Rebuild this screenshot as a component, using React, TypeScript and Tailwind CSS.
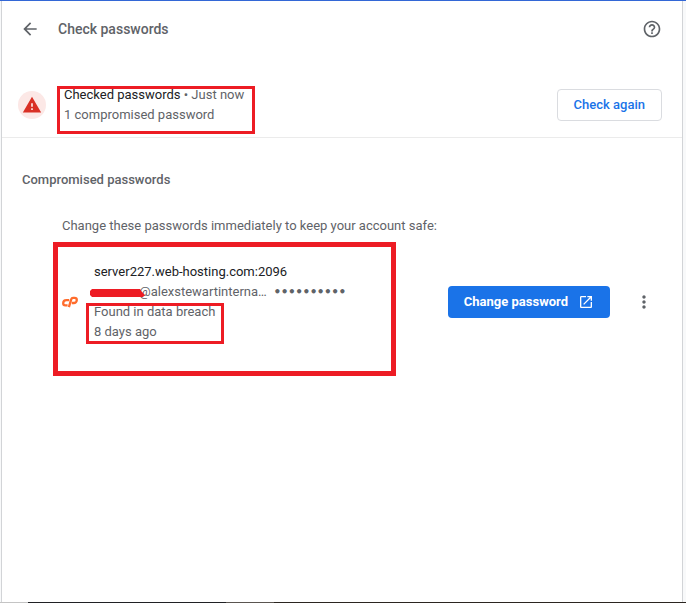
import React from "react";

function BackIcon() {
  return (
    <svg viewBox="0 0 24 24" className="size-5" fill="#5f6368" aria-hidden="true">
      <path d="M20 11H7.83l5.59-5.59L12 4l-8 8 8 8 1.41-1.41L7.83 13H20v-2z" />
    </svg>
  );
}

function HelpIcon() {
  return (
    <svg viewBox="0 0 24 24" className="size-5" fill="#5f6368" aria-hidden="true">
      <path d="M11 18h2v-2h-2v2zm1-16C6.48 2 2 6.48 2 12s4.48 10 10 10 10-4.48 10-10S17.52 2 12 2zm0 18c-4.41 0-8-3.59-8-8s3.59-8 8-8 8 3.59 8 8-3.59 8-8 8zm0-14c-2.21 0-4 1.79-4 4h2c0-1.1.9-2 2-2s2 .9 2 2c0 2-3 1.75-3 5h2c0-2.25 3-2.5 3-5 0-2.21-1.79-4-4-4z" />
    </svg>
  );
}

function WarningIcon() {
  return (
    <svg viewBox="0 0 24 24" className="size-5" fill="#d93025" aria-hidden="true">
      <path d="M1 21h22L12 2 1 21zm12-3h-2v-2h2v2zm0-4h-2v-4h2v4z" />
    </svg>
  );
}

function OpenIcon() {
  return (
    <svg viewBox="0 0 24 24" className="size-4" fill="currentColor" aria-hidden="true">
      <path d="M19 19H5V5h7V3H5c-1.11 0-2 .9-2 2v14c0 1.1.89 2 2 2h14c1.1 0 2-.9 2-2v-7h-2v7zM14 3v2h3.59l-9.83 9.83 1.41 1.41L19 6.41V10h2V3h-7z" />
    </svg>
  );
}

function MoreIcon() {
  return (
    <svg viewBox="0 0 24 24" className="size-5" fill="#5f6368" aria-hidden="true">
      <path d="M12 8c1.1 0 2-.9 2-2s-.9-2-2-2-2 .9-2 2 .9 2 2 2zm0 2c-1.1 0-2 .9-2 2s.9 2 2 2 2-.9 2-2-.9-2-2-2zm0 6c-1.1 0-2 .9-2 2s.9 2 2 2 2-.9 2-2-.9-2-2-2z" />
    </svg>
  );
}

function HostIcon() {
  return (
    <svg viewBox="0 0 16 16" className="size-4 shrink-0" fill="none" stroke="#ff6c2c" strokeWidth="2.3" aria-hidden="true">
      <path d="M7.2 6.1H4.4C2.6 6.1 1.2 7.5 1.2 9.3c0 1.3.9 2.1 2.1 2.1h2.3" />
      <path d="M6.9 13.2 9.2 5.4c.3-1 .8-1.5 1.8-1.5h1.6c1.4 0 2.2.8 2.2 2 0 1.7-1.3 3.1-3 3.1h-2" />
    </svg>
  );
}

function Mark({ className }: { className: string }) {
  return <div aria-hidden="true" className={`pointer-events-none absolute border-[#ed1c24] ${className}`} />;
}

export default function App() {
  return (
    <div className="flex min-h-screen flex-col border-t border-[#3367d6] bg-[#f8f9fa] font-['Roboto','Liberation_Sans',sans-serif] text-[13px] leading-5 text-[#5f6368]">
      <main className="mr-[3px] ml-px flex-1 border-x border-[#d2d4d7] bg-white">
        <header className="flex h-14 items-center justify-between pr-5 pl-[18px]">
          <div className="flex items-center gap-[18px]">
            <button type="button" aria-label="Back">
              <BackIcon />
            </button>
            <h1 className="text-sm font-medium">Check passwords</h1>
          </div>
          <button type="button" aria-label="Help">
            <HelpIcon />
          </button>
        </header>

        <section className="mt-4 flex h-[65px] items-center justify-between border-b border-[#ebebeb] pr-5 pl-4">
          <div className="flex items-center gap-[18px]">
            <div className="flex size-7 items-center justify-center rounded-full bg-[#fce8e6]">
              <WarningIcon />
            </div>
            <div className="relative">
              <p>
                <span className="text-[#202124]">Checked passwords</span> • Just now
              </p>
              <p>1 compromised password</p>
              <Mark className="top-px -left-[7px] h-12 w-[198px] border-3" />
            </div>
          </div>
          <button type="button" className="h-8 rounded-sm border border-[#dadce0] px-4 font-medium text-[#1a73e8]">
            Check again
          </button>
        </section>

        <section className="pt-8 pr-7 pl-5">
          <h2 className="font-medium">Compromised passwords</h2>
          <p className="mt-[26px] pl-10">Change these passwords immediately to keep your account safe:</p>
          <div className="mt-[26px] flex items-center pl-10">
            <div className="relative flex items-center gap-4">
              <HostIcon />
              <div className="relative">
                <p className="text-[#202124]">server227.web-hosting.com:2096</p>
                <div className="flex items-center gap-[7px]">
                  <span className="relative block pl-[45px]">
                    @alexstewartinterna…
                    <svg viewBox="0 0 56 10" className="absolute top-[6px] -left-[5px] h-[10px] w-14" fill="#ed1c24" aria-hidden="true">
                      <path d="M3 1h48l2 3 3 3-2 2H3L1 7V3z" />
                    </svg>
                  </span>
                  <input
                    type="password"
                    aria-label="Password"
                    readOnly
                    value="0000000000"
                    className="h-5 w-20 bg-transparent font-['DejaVu_Sans_Mono',monospace] text-xs font-bold outline-none"
                  />
                </div>
                <p>Found in data breach</p>
                <p>8 days ago</p>
                <Mark className="top-[41px] -left-2 h-[41px] w-[138px] border-3" />
              </div>
              <Mark className="-top-5 -left-[9px] h-[134px] w-[343px] border-5" />
            </div>
            <button type="button" className="ml-auto flex h-8 items-center gap-[10px] rounded-sm bg-[#1a73e8] px-4 font-bold text-white">
              Change password
              <OpenIcon />
            </button>
            <button type="button" aria-label="More actions" className="ml-6">
              <MoreIcon />
            </button>
          </div>
        </section>
      </main>
      <footer className="flex h-px">
        <div className="w-7 bg-[#c4c4c4]" />
        <div className="w-[198px] bg-[#202124]" />
        <div className="w-12 bg-[#5a5550]" />
        <div className="flex-1 bg-[#2b2520]" />
      </footer>
    </div>
  );
}
